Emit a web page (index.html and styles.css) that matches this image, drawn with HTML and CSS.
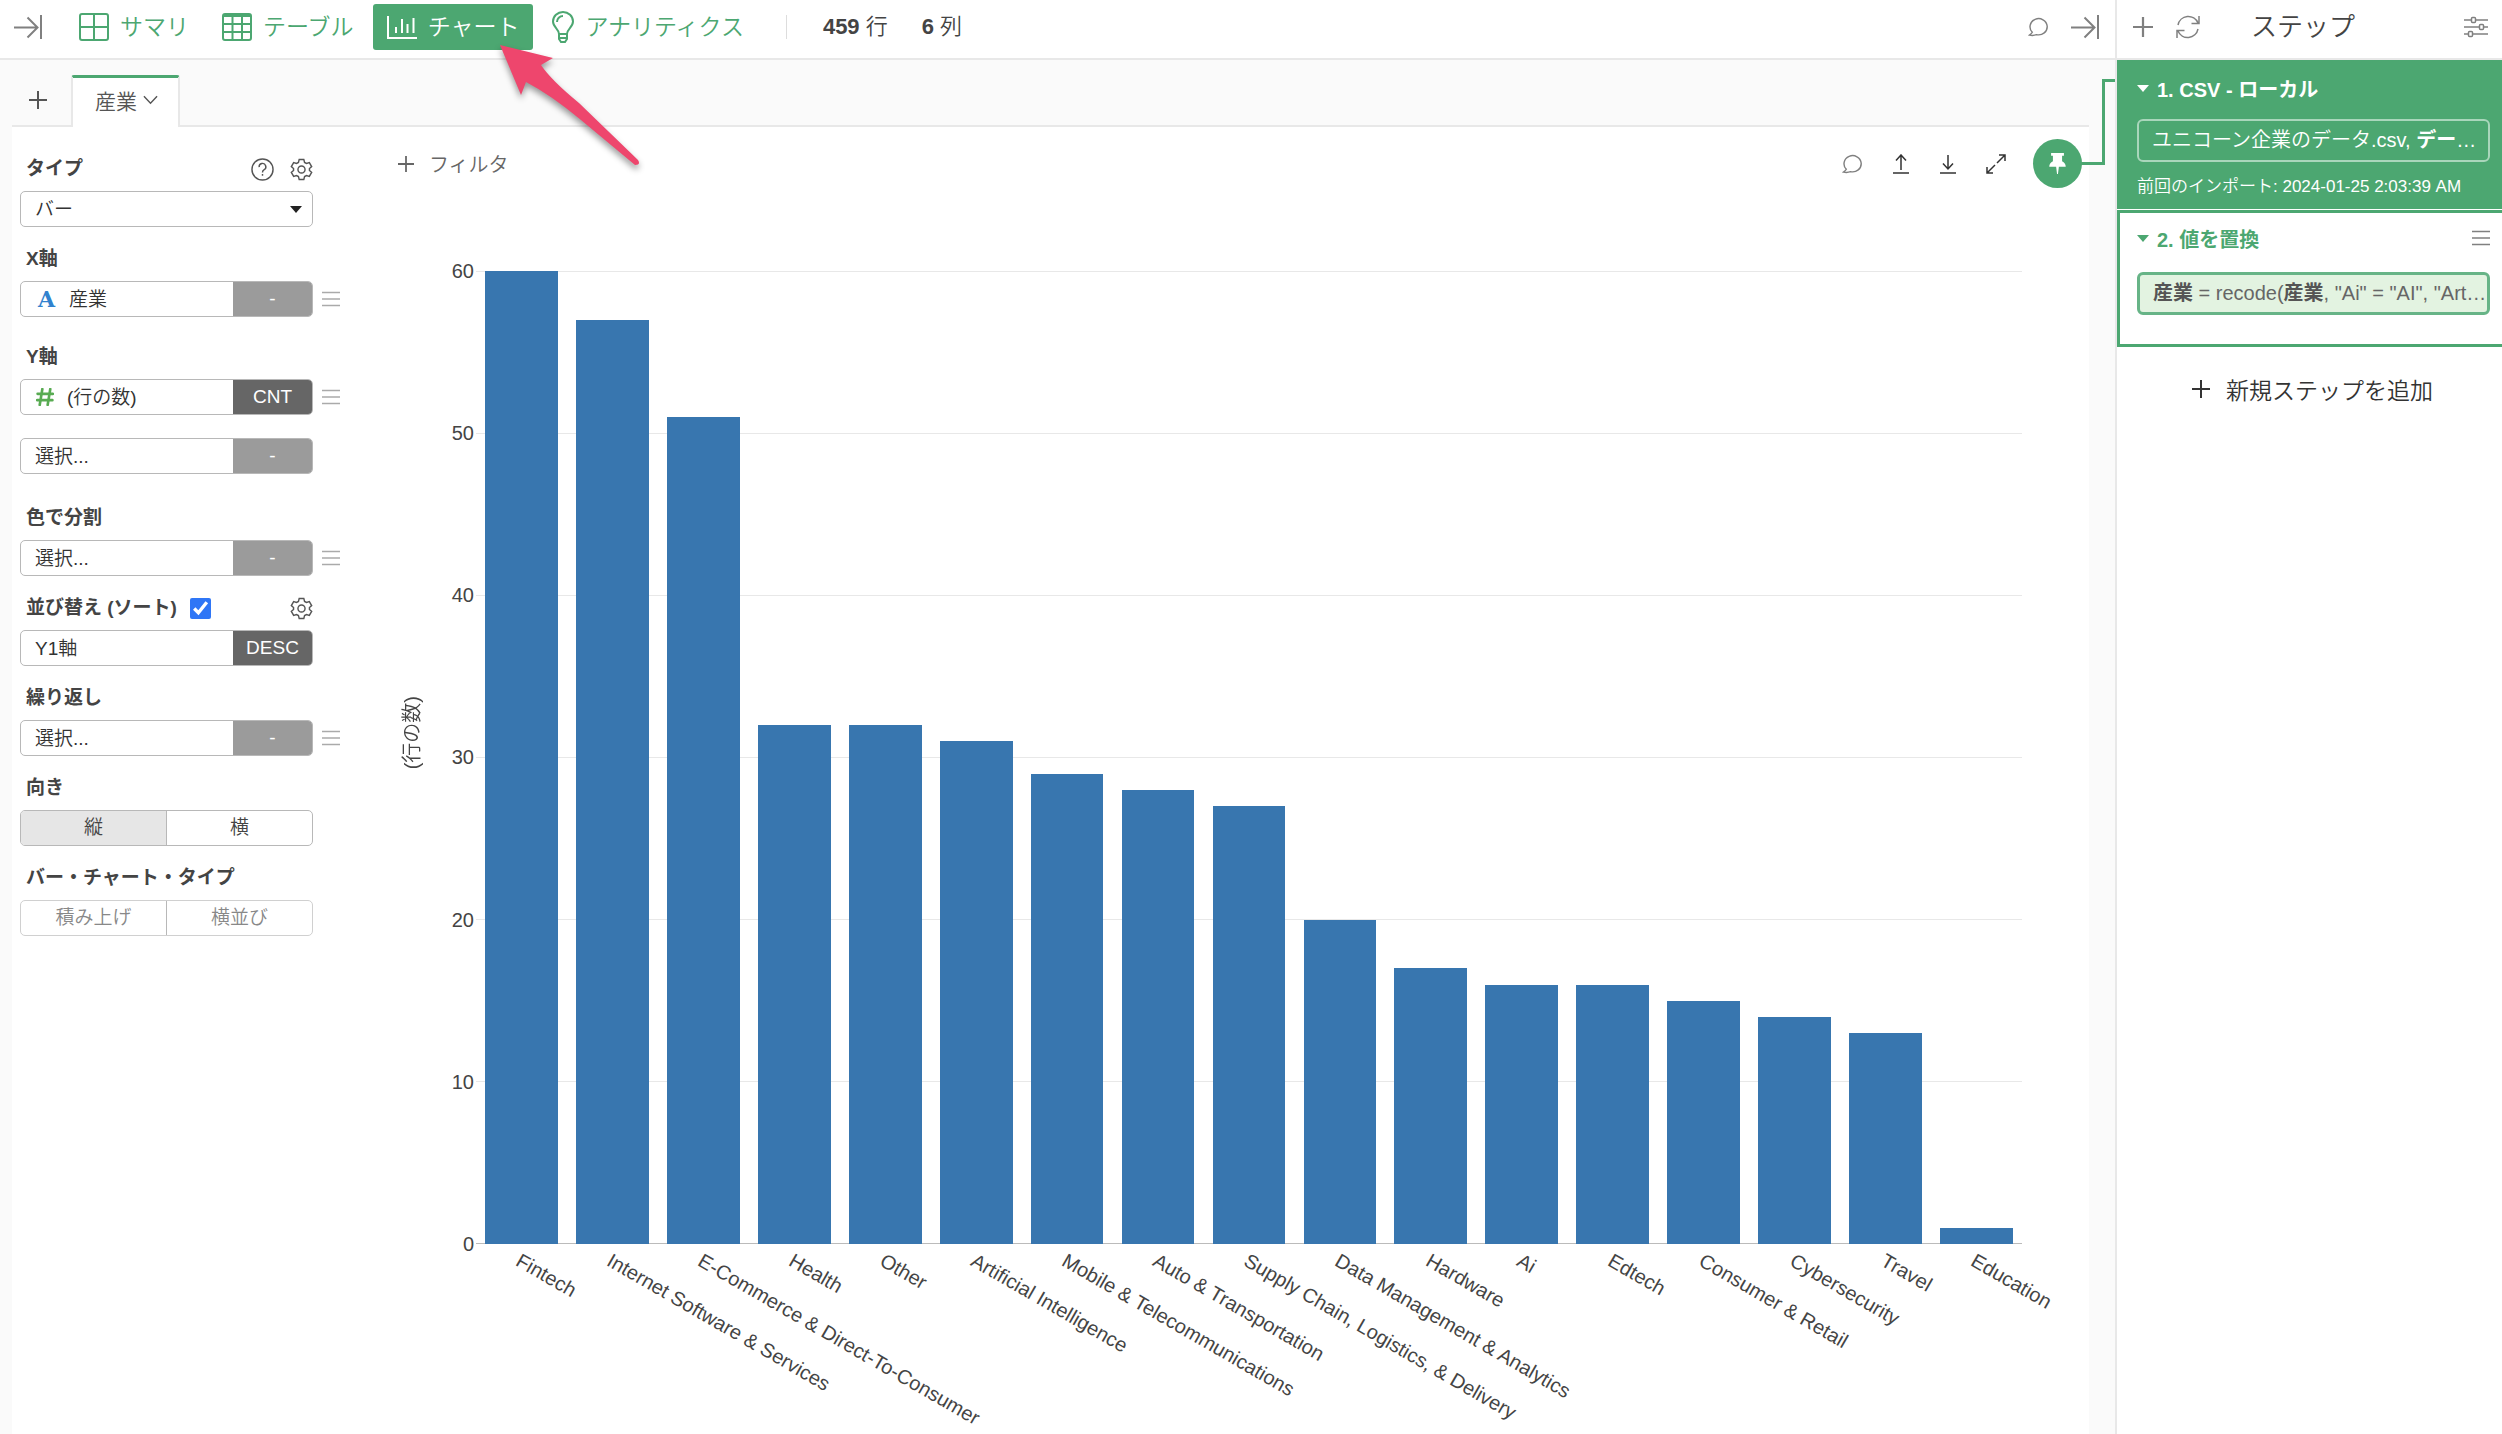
FILE: index.html
```
<!DOCTYPE html>
<html lang="ja">
<head>
    <meta charset="UTF-8">
    <meta name="viewport" content="width=device-width, initial-scale=1.0">
    <title>チャート - 産業</title>
    <link rel="stylesheet" href="styles.css">
</head>
<body>

<!-- Shared icons -->
<svg class="sprite" aria-hidden="true">
    <symbol id="i-collapse" viewBox="0 0 28 24"><path d="M0 12.500H23M13.500 2.500L23.500 12.500L13.500 22.500M27 0V24"/></symbol>
    <symbol id="i-plus" viewBox="0 0 18 18"><path d="M9 0V18M0 9H18"/></symbol>
    <symbol id="i-comment" viewBox="0 0 22 20"><path d="M4.500 15.500A9 8.500 0 1 1 9 18C6.500 19 4 19 1.500 18.500C3 17.500 4 16.500 4.500 15.500Z"/></symbol>
    <symbol id="i-menu" viewBox="0 0 18 16"><path d="M0 1.500H18M0 8H18M0 14.500H18"/></symbol>
    <symbol id="i-gear" viewBox="0 0 24 24"><circle cx="12" cy="12" r="3.700"/><path d="M9.600 1.500H14.400L15.200 4.600L17.200 5.700L20.200 4.800L22.600 8.900L20.300 11V13L22.600 15.100L20.200 19.200L17.200 18.300L15.200 19.400L14.400 22.500H9.600L8.800 19.400L6.800 18.300L3.800 19.200L1.400 15.100L3.700 13V11L1.400 8.900L3.800 4.800L6.800 5.700L8.800 4.600Z"/></symbol>
    <symbol id="i-caret" viewBox="0 0 12 7"><path d="M0 0H12L6 7Z"/></symbol>
</svg>

<div class="app">
    <div class="main">
        <header class="topbar">
            <button class="icon-btn" aria-label="折りたたむ"><svg class="icon icon-collapse"><use href="#i-collapse"/></svg></button>
            <nav class="nav">
                <a class="nav-item" href="#">
                    <svg class="nav-icon" viewBox="0 0 30 28"><rect x="1" y="1" width="28" height="26" rx="2"/><path d="M1 14H29M15 1V27"/></svg>
                    サマリ
                </a>
                <a class="nav-item" href="#">
                    <svg class="nav-icon" viewBox="0 0 30 28"><rect x="1" y="1" width="28" height="26" rx="2"/><path d="M1 3H29M1 11H29M1 19H29M10.500 3V27M20 3V27"/></svg>
                    テーブル
                </a>
                <a class="nav-item active" href="#">
                    <svg class="nav-icon" viewBox="0 0 30 28"><path d="M1 3V25H30M9 20V14M15 20V6M20.500 20V11M26.500 20V5"/></svg>
                    チャート
                </a>
                <a class="nav-item" href="#">
                    <svg class="nav-icon nav-bulb" viewBox="0 0 22 32"><path d="M7 23C7 18 1 16 1 10.500A10 9.500 0 0 1 21 10.500C21 16 15 18 15 23ZM5 11A6 6 0 0 1 11 5M7 23V28L9 31H13L15 28V23M7 27H15"/></svg>
                    アナリティクス
                </a>
            </nav>
            <div class="counts">
                <span><b>459</b> 行</span>
                <span><b>6</b> 列</span>
            </div>
            <div class="topbar-tools">
                <button class="icon-btn" aria-label="コメント"><svg class="icon icon-comment"><use href="#i-comment"/></svg></button>
                <button class="icon-btn" aria-label="ステップを折りたたむ"><svg class="icon icon-collapse"><use href="#i-collapse"/></svg></button>
            </div>
        </header>

        <div class="tabs">
            <button class="tab-add" aria-label="チャートを追加"><svg class="icon icon-plus"><use href="#i-plus"/></svg></button>
            <button class="tab">産業 <svg class="chevron" viewBox="0 0 16 10"><path d="M1 1L8 8.500L15 1"/></svg></button>
        </div>

        <div class="workspace">
            <form class="settings">
                <div class="group">
                    <div class="group-head">
                        <label for="type">タイプ</label>
                        <span class="head-tools">
                            <button type="button" class="icon-btn" aria-label="ヘルプ"><svg class="icon icon-gear" viewBox="0 0 24 24"><circle cx="12" cy="12" r="11"/><path d="M8.500 9.500A3.500 3.500 0 1 1 13.500 12.300C12.300 13 12 13.500 12 15M12 16.800V18.600"/></svg></button>
                            <button type="button" class="icon-btn" aria-label="設定"><svg class="icon icon-gear"><use href="#i-gear"/></svg></button>
                        </span>
                    </div>
                    <div class="row">
                        <div class="field">
                            <select id="type"><option>バー</option></select>
                            <svg class="caret"><use href="#i-caret"/></svg>
                        </div>
                    </div>
                </div>

                <div class="group group-x">
                    <div class="group-head"><label for="x-axis">X軸</label></div>
                    <div class="row">
                        <div class="field">
                            <span class="type-text">A</span>
                            <select id="x-axis" class="with-icon"><option>産業</option></select>
                            <button type="button" class="func">-</button>
                        </div>
                        <button type="button" class="icon-btn" aria-label="メニュー"><svg class="icon icon-menu"><use href="#i-menu"/></svg></button>
                    </div>
                </div>

                <div class="group group-y">
                    <div class="group-head"><label for="y-axis">Y軸</label></div>
                    <div class="row">
                        <div class="field">
                            <svg class="type-number" viewBox="0 0 17 17"><path d="M6 1L3.500 16M13.500 1L11 16M1.500 5.500H16M1 11.500H15.500"/></svg>
                            <select id="y-axis" class="with-icon"><option>(行の数)</option></select>
                            <button type="button" class="func set">CNT</button>
                        </div>
                        <button type="button" class="icon-btn" aria-label="メニュー"><svg class="icon icon-menu"><use href="#i-menu"/></svg></button>
                    </div>
                    <div class="row">
                        <div class="field">
                            <select aria-label="Y2軸"><option>選択...</option></select>
                            <button type="button" class="func">-</button>
                        </div>
                    </div>
                </div>

                <div class="group">
                    <div class="group-head"><label for="color">色で分割</label></div>
                    <div class="row">
                        <div class="field">
                            <select id="color"><option>選択...</option></select>
                            <button type="button" class="func">-</button>
                        </div>
                        <button type="button" class="icon-btn" aria-label="メニュー"><svg class="icon icon-menu"><use href="#i-menu"/></svg></button>
                    </div>
                </div>

                <div class="group">
                    <div class="group-head">
                        <label for="sort">並び替え (ソート)</label>
                        <input type="checkbox" id="sort" checked>
                        <span class="head-tools">
                            <button type="button" class="icon-btn" aria-label="設定"><svg class="icon icon-gear"><use href="#i-gear"/></svg></button>
                        </span>
                    </div>
                    <div class="row">
                        <div class="field">
                            <select aria-label="ソート列"><option>Y1軸</option></select>
                            <button type="button" class="func set">DESC</button>
                        </div>
                    </div>
                </div>

                <div class="group">
                    <div class="group-head"><label for="repeat">繰り返し</label></div>
                    <div class="row">
                        <div class="field">
                            <select id="repeat"><option>選択...</option></select>
                            <button type="button" class="func">-</button>
                        </div>
                        <button type="button" class="icon-btn" aria-label="メニュー"><svg class="icon icon-menu"><use href="#i-menu"/></svg></button>
                    </div>
                </div>

                <div class="group">
                    <div class="group-head">向き</div>
                    <div class="toggle">
                        <button type="button" class="on">縦</button>
                        <button type="button">横</button>
                    </div>
                </div>

                <div class="group">
                    <div class="group-head">バー・チャート・タイプ</div>
                    <div class="toggle disabled">
                        <button type="button" disabled>積み上げ</button>
                        <button type="button" disabled>横並び</button>
                    </div>
                </div>
            </form>

            <section class="panel">
                <div class="toolbar">
                    <button class="filter"><svg class="icon icon-plus-sm"><use href="#i-plus"/></svg>フィルタ</button>
                    <div class="tools">
                        <button class="icon-btn" aria-label="コメント"><svg class="icon icon-comment"><use href="#i-comment"/></svg></button>
                        <button class="icon-btn dark" aria-label="アップロード"><svg class="icon icon-arrow" viewBox="0 0 18 20"><path d="M9 16V1M4 6.500L9 1L14 6.500M1 19H17"/></svg></button>
                        <button class="icon-btn dark" aria-label="ダウンロード"><svg class="icon icon-arrow" viewBox="0 0 18 20"><path d="M9 1V15M4 9.500L9 15L14 9.500M1 19H17"/></svg></button>
                        <button class="icon-btn dark" aria-label="拡大"><svg class="icon icon-expand" viewBox="0 0 20 20"><path d="M1 19L9 11M11 9L19 1M13 1H19V7M1 13V19H7"/></svg></button>
                    </div>
                    <button class="pin" aria-label="ピン"><svg class="icon-pin" viewBox="0 0 18 24"><path d="M2 0H16V3H14V9C16.500 10.500 18 12 18 15H10.500L9.500 23H8.500L7.500 15H0C0 12 1.500 10.500 4 9V3H2Z"/></svg></button>
                </div>

                <div class="chart">
                    <div class="y-title"><span>(行の数)</span></div>
                    <div class="y-ticks">
                        <span>60</span><span>50</span><span>40</span><span>30</span><span>20</span><span>10</span><span>0</span>
                    </div>
                    <div class="plot">
                        <div class="grid-lines"><i></i><i></i><i></i><i></i><i></i><i></i><i class="zero"></i></div>
                        <div class="bars" id="bars"></div>
                    </div>
                    <div class="x-labels" id="x-labels"></div>
                </div>
            </section>
        </div>

        <!-- Line from the pin to the step it is attached to -->
        <div class="connector"></div>
    </div>

    <aside class="steps">
        <header class="steps-head">
            <button class="icon-btn" aria-label="追加"><svg class="icon icon-plus-lg"><use href="#i-plus"/></svg></button>
            <button class="icon-btn" aria-label="更新"><svg class="icon icon-refresh" viewBox="0 0 24 24"><path d="M2 10A10.500 10.500 0 0 1 22 8M23 1V8.500H15.500M22 14A10.500 10.500 0 0 1 2 16M1 23V15.500H8.500"/></svg></button>
            <h2>ステップ</h2>
            <button class="icon-btn" aria-label="設定"><svg class="icon icon-sliders" viewBox="0 0 24 20"><path d="M0 3H7M12 3H24M0 10H15M20 10H24M0 17H4M9 17H24"/><rect x="7.500" y="0.500" width="4" height="5" rx="1"/><rect x="15.500" y="7.500" width="4" height="5" rx="1"/><rect x="4.500" y="14.500" width="4" height="5" rx="1"/></svg></button>
        </header>

        <div class="step source">
            <h3><svg class="caret"><use href="#i-caret"/></svg>1. CSV - ローカル</h3>
            <div class="chip">ユニコーン企業のデータ.csv, <b>デー</b>…</div>
            <p>前回のインポート: 2024-01-25 2:03:39 AM</p>
        </div>

        <div class="step current">
            <h3><svg class="caret"><use href="#i-caret"/></svg>2. 値を置換
                <button class="icon-btn" aria-label="メニュー"><svg class="icon icon-menu"><use href="#i-menu"/></svg></button>
            </h3>
            <div class="chip"><b>産業</b> = recode(<b>産業</b>, "Ai" = "AI", "Art…</div>
        </div>

        <button class="add-step"><svg class="icon icon-plus"><use href="#i-plus"/></svg>新規ステップを追加</button>
    </aside>
</div>

<!-- Arrow pointing at the chart tab -->
<svg class="pointer" viewBox="0 0 150 130" aria-hidden="true">
    <path d="M5 5L58 18L46 25Q56 40 84 63L143 120Q146 125 140 125L86 80Q56 55 31 42L26 55Z"/>
</svg>

<script>
    // Number of rows for each industry
    const data = [
        ['Fintech', 60],
        ['Internet Software & Services', 57],
        ['E-Commerce & Direct-To-Consumer', 51],
        ['Health', 32],
        ['Other', 32],
        ['Artificial Intelligence', 31],
        ['Mobile & Telecommunications', 29],
        ['Auto & Transportation', 28],
        ['Supply Chain, Logistics, & Delivery', 27],
        ['Data Management & Analytics', 20],
        ['Hardware', 17],
        ['Ai', 16],
        ['Edtech', 16],
        ['Consumer & Retail', 15],
        ['Cybersecurity', 14],
        ['Travel', 13],
        ['Education', 1]
    ];
    const max = 60;

    const bars = document.getElementById('bars');
    const labels = document.getElementById('x-labels');

    data.forEach(function([name, count]) {
        const bar = document.createElement('div');
        bar.className = 'bar';
        bar.style.height = (count / max * 100) + '%';
        bars.appendChild(bar);

        const cell = document.createElement('div');
        const text = document.createElement('span');
        text.textContent = name;
        cell.appendChild(text);
        labels.appendChild(cell);
    });
</script>

</body>
</html>
```
FILE: styles.css
```
*, *::before, *::after {
    box-sizing: border-box;
}
body {
    margin: 0;
    font-family: "Liberation Sans", "Noto Sans CJK JP", sans-serif;
    font-size: 20px;
    font-weight: 350;
    color: #444;
    background-color: #fff;
}
button, select {
    font: inherit;
    color: inherit;
    background: none;
    border: none;
    padding: 0;
    margin: 0;
}
button {
    cursor: pointer;
}
b {
    font-weight: bold;
}
h2, h3, p {
    margin: 0;
}
.sprite {
    display: none;
}
.app {
    display: flex;
    min-height: 100vh;
}

/* Icons */
svg {
    flex: none;
    display: block;
}
.icon, .nav-icon, .chevron {
    fill: none;
    stroke: currentColor;
    stroke-width: 2;
}
.icon-btn {
    display: flex;
    align-items: center;
    color: #808080;
}
.icon-btn.dark {
    color: #333;
}
.icon-collapse {
    width: 28px;
    height: 24px;
}
.icon-comment {
    width: 21px;
    height: 20px;
    stroke-width: 1.5;
}
.icon-plus {
    width: 18px;
    height: 18px;
}
.icon-plus-sm {
    width: 16px;
    height: 16px;
}
.icon-plus-lg {
    width: 20px;
    height: 20px;
}
.icon-menu {
    width: 18px;
    height: 16px;
    stroke-width: 1.5;
}
.icon-gear {
    width: 23px;
    height: 23px;
    color: #555;
    stroke-width: 1.5;
}
.icon-arrow {
    width: 18px;
    height: 20px;
    stroke-width: 1.5;
}
.icon-expand {
    width: 20px;
    height: 20px;
    stroke-width: 1.5;
}
.icon-refresh, .icon-sliders {
    width: 24px;
    height: 24px;
    stroke-width: 1.5;
}
.caret {
    width: 12px;
    height: 7px;
    fill: currentColor;
}

/* Top bar */
.main {
    position: relative;
    flex: 1;
    min-width: 0;
    display: flex;
    flex-direction: column;
    background-color: #fafafa;
}
.topbar {
    display: flex;
    align-items: center;
    height: 60px;
    padding: 0 16px 4px 14px;
    background-color: #fff;
    border-bottom: 2px solid #e8e8e8;
}
.nav {
    display: flex;
    gap: 5px;
    margin-left: 23px;
}
.nav-item {
    display: flex;
    align-items: center;
    gap: 11px;
    height: 46px;
    padding: 0 14px;
    border-radius: 3px;
    font-size: 23px;
    line-height: 26px;
    color: #4ca771;
    text-decoration: none;
}
.nav-item.active {
    background-color: #4ca771;
    color: #fff;
}
.nav-icon {
    width: 30px;
    height: 28px;
}
.nav-bulb {
    width: 22px;
    height: 32px;
}
.counts {
    display: flex;
    align-items: center;
    gap: 34px;
    height: 24px;
    margin-left: 28px;
    padding-left: 36px;
    border-left: 1px solid #ddd;
    font-size: 22px;
    line-height: 24px;
}
.topbar-tools {
    display: flex;
    align-items: center;
    gap: 22px;
    margin-left: auto;
}

/* Chart tabs */
.tabs {
    display: flex;
    align-items: flex-end;
    height: 67px;
    margin: 0 26px 0 12px;
    border-bottom: 2px solid #e8e8e8;
}
.tab-add {
    display: flex;
    align-items: center;
    justify-content: center;
    width: 51px;
    height: 50px;
    color: #555;
}
.tab {
    display: flex;
    align-items: center;
    gap: 6px;
    height: 52px;
    margin: 0 0 -2px 8px;
    padding: 0 20px 6px 22px;
    background-color: #fff;
    border: 2px solid #e8e8e8;
    border-top: 3px solid #4ca771;
    border-bottom: none;
    border-radius: 3px 3px 0 0;
    font-size: 21px;
    color: #555;
}
.chevron {
    width: 15px;
    height: 10px;
    stroke-width: 1.5;
}
.workspace {
    flex: 1;
    display: flex;
    margin: 0 26px 0 12px;
    background-color: #fff;
}

/* Settings column */
.settings {
    width: 348px;
    flex: none;
    padding: 30px 20px 20px 8px;
}
.group {
    margin-bottom: 20px;
}
.group-x {
    margin-bottom: 28px;
}
.group-y {
    margin-bottom: 32px;
}
.group-head {
    display: flex;
    align-items: center;
    width: 293px;
    height: 24px;
    margin-bottom: 10px;
    padding-left: 6px;
    font-size: 19px;
    font-weight: bold;
    line-height: 24px;
}
.group-head input {
    width: 21px;
    height: 21px;
    margin: 0 0 0 13px;
    accent-color: #2f76f6;
}
.head-tools {
    display: flex;
    gap: 16px;
    margin-left: auto;
}
.row {
    display: flex;
    align-items: center;
    gap: 9px;
}
.row + .row {
    margin-top: 23px;
}
.row .icon-btn {
    color: #aaa;
}
.field {
    display: flex;
    align-items: center;
    width: 293px;
    height: 36px;
    border: 1px solid #b8b8b8;
    border-radius: 5px;
    overflow: hidden;
    font-size: 19px;
}
.field select {
    appearance: none;
    flex: 1;
    min-width: 0;
    height: 34px;
    padding-left: 14px;
    color: #333;
}
.field select.with-icon {
    padding-left: 13px;
}
.field .caret {
    margin: 0 10px 0 -22px;
    color: #222;
    pointer-events: none;
}
.type-text {
    width: 18px;
    margin-left: 17px;
    font-family: "DejaVu Serif", serif;
    font-weight: bold;
    font-size: 22px;
    color: #3182ce;
}
.type-number {
    width: 18px;
    height: 18px;
    margin-left: 15px;
    fill: none;
    stroke: #58ab52;
    stroke-width: 2.5;
    stroke-linecap: round;
}
.func {
    width: 79px;
    height: 36px;
    background-color: #9b9b9b;
    color: #fff;
}
.func.set {
    background-color: #666;
}
.toggle {
    display: flex;
    width: 293px;
    height: 36px;
    border: 1px solid #b8b8b8;
    border-radius: 5px;
    overflow: hidden;
    font-size: 19px;
}
.toggle button {
    flex: 1;
    line-height: 34px;
}
.toggle button + button {
    border-left: 1px solid #b8b8b8;
}
.toggle .on {
    background-color: #e6e6e6;
}
.toggle.disabled {
    border-color: #d0d0d0;
    color: #888;
}

/* Chart panel */
.panel {
    flex: 1;
    min-width: 0;
    display: flex;
    flex-direction: column;
}
.toolbar {
    display: flex;
    align-items: center;
    padding: 12px 7px 0 38px;
}
.filter {
    display: flex;
    align-items: center;
    gap: 15px;
    color: #666;
}
.tools {
    display: flex;
    align-items: center;
    gap: 29px;
    margin-left: auto;
}
.pin {
    display: flex;
    align-items: center;
    justify-content: center;
    width: 49px;
    height: 49px;
    margin-left: 27px;
    border-radius: 50%;
    background-color: #4ca771;
}
.icon-pin {
    width: 17px;
    height: 22px;
    fill: #fff;
}
.connector {
    position: absolute;
    top: 79px;
    right: 0;
    width: 34px;
    height: 86px;
}
.connector::before, .connector::after {
    content: "";
    position: absolute;
    border: 3px solid #4ca771;
}
.connector::before {
    top: 0;
    right: 0;
    width: 13px;
    height: 86px;
    border-right: none;
    border-bottom: none;
}
.connector::after {
    bottom: 0;
    left: 0;
    width: 24px;
    height: 3px;
    border-width: 3px 0 0;
}
.chart {
    flex: 1;
    display: grid;
    grid-template-columns: 24px 52px 1fr;
    grid-template-rows: 1fr 190px;
    padding: 83px 67px 0 38px;
}
.y-title {
    display: flex;
    align-items: center;
    justify-content: center;
    padding-bottom: 50px;
}
.y-title span {
    writing-mode: vertical-rl;
    text-orientation: sideways;
    transform: rotate(180deg);
}
.y-ticks {
    display: flex;
    flex-direction: column;
    justify-content: space-between;
    text-align: right;
}
.y-ticks span {
    height: 0;
    line-height: 0;
}
.plot {
    display: grid;
    margin-left: 2px;
}
.grid-lines, .bars {
    grid-area: 1 / 1;
}
.grid-lines {
    display: flex;
    flex-direction: column;
    justify-content: space-between;
}
.grid-lines i {
    height: 0;
    border-top: 1px solid #e8e8e8;
}
.grid-lines .zero {
    border-top-color: #bbb;
}
.bars {
    display: flex;
    align-items: flex-end;
    justify-content: space-around;
}
.bar {
    /* 80% of one of the 17 slots */
    width: calc(80% / 17);
    background-color: #3876af;
}
.x-labels {
    grid-column: 3;
    display: flex;
    padding-top: 5px;
    margin-left: 4px;
    margin-right: -2px;
}
.x-labels div {
    flex: 1;
    width: 0;
    padding-left: calc(50% / 17);
}
.x-labels span {
    display: inline-block;
    line-height: 20px;
    white-space: nowrap;
    transform: rotate(30deg);
    transform-origin: left top;
}

/* Steps */
.steps {
    flex: none;
    width: 387px;
    border-left: 2px solid #e8e8e8;
}
.steps-head {
    display: flex;
    align-items: center;
    height: 60px;
    padding: 0 14px 4px 16px;
    border-bottom: 2px solid #e8e8e8;
}
.steps-head h2 {
    flex: 1;
    margin-left: 51px;
    font-size: 26px;
    font-weight: 350;
    line-height: 30px;
}
.steps-head .icon-btn + .icon-btn {
    margin-left: 23px;
}
.step h3 {
    display: flex;
    align-items: center;
    gap: 8px;
    height: 24px;
    font-size: 20px;
}
.step .icon-btn {
    margin-left: auto;
}
.chip {
    height: 43px;
    padding: 0 0 0 13px;
    border: 2px solid #a9d6bb;
    border-radius: 6px;
    font-size: 20px;
    line-height: 39px;
    white-space: nowrap;
    overflow: hidden;
}
.source {
    height: 149px;
    padding: 16px 12px 0 20px;
    background-color: #4ca771;
    color: #fff;
}
.source .chip {
    margin: 19px 0 13px;
}
.source p {
    font-size: 17px;
    line-height: 24px;
}
.current {
    height: 137px;
    margin-top: 1px;
    padding: 13px 12px 0 17px;
    border: 3px solid #4ca771;
    border-right: none;
}
.current h3 {
    color: #4ca771;
}
.current .chip {
    margin-top: 22px;
    border: 3px solid #67b487;
    background-color: #e3f3e1;
    color: #666;
    line-height: 37px;
}
.current b {
    color: #555;
}
.add-step {
    display: flex;
    align-items: center;
    justify-content: center;
    gap: 16px;
    width: 100%;
    margin-top: 25px;
    padding-left: 6px;
    font-size: 23px;
    color: #333;
}

/* Callout arrow */
.pointer {
    position: absolute;
    top: 40px;
    left: 495px;
    width: 150px;
    height: 130px;
    fill: #ee466d;
    filter: drop-shadow(0 4px 3px rgba(0, 0, 0, 0.4));
    pointer-events: none;
}
```
